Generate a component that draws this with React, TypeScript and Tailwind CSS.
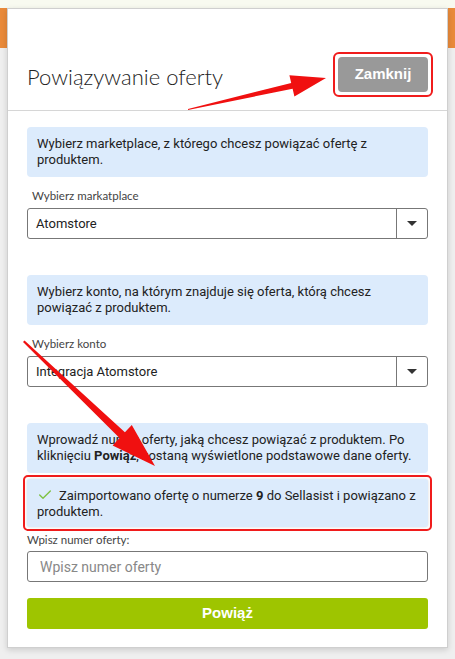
import { Check } from 'lucide-react'

function Caret() {
  return (
    <svg width="10" height="6" viewBox="0 0 10 6">
      <path d="M0 0 L10 0 L5 5 Z" fill="#333" />
    </svg>
  )
}

function Select({ value }: { value: string }) {
  return (
    <div className="flex h-[31px] rounded-[3px] border border-[#777] bg-white">
      <div className="flex flex-1 items-center px-[8px] text-[13px] text-[#222]">{value}</div>
      <div className="flex w-[31px] items-center justify-center border-l border-[#777]">
        <Caret />
      </div>
    </div>
  )
}

function Info({ children }: { children: React.ReactNode }) {
  return (
    <div className="rounded-[4px] bg-[#dcebfc] px-[10px] py-[9px] text-[13px] leading-[16px] text-[#222]">
      {children}
    </div>
  )
}

function Label({ children }: { children: React.ReactNode }) {
  return (
    <p className="mb-[5px] pl-[5px] text-[11.5px] leading-[14px] text-[#444]" style={{ fontFamily: 'Lato, sans-serif' }}>
      {children}
    </p>
  )
}

export default function App() {
  return (
    <div
      className="relative h-[659px] w-[455px] overflow-hidden bg-[linear-gradient(to_bottom,#f8faf0_0,#f8faf0_8px,#e98a3a_8px,#e98a3a_48px,#efefef_48px)] pt-[8px]"
      style={{ fontFamily: 'Roboto, "Liberation Sans", sans-serif' }}
    >
      <div className="mx-[7px] border border-[#cfcfcf] bg-white shadow-[0_2px_6px_rgba(0,0,0,0.15)]">
        <div className="flex items-center justify-between border-b border-[#d6d6d6] pb-[13px] pl-[19px] pr-[14px] pt-[43px]">
          <h1 className="pt-[4px] text-[22px] font-light text-[#222]" style={{ fontFamily: 'Lato, sans-serif' }}>
            Powiązywanie oferty
          </h1>
          <div className="rounded-[6px] border-2 border-[#f01c1c] p-[3px]">
            <button
              className="h-[35px] w-[90px] rounded-[4px] bg-[#999] text-[15px] font-bold text-white"
              style={{ fontFamily: '"Liberation Sans", Arial, sans-serif' }}
            >
              Zamknij
            </button>
          </div>
        </div>

        <div className="px-[19px] pb-[18px] pt-[16px]">
          <Info>Wybierz marketplace, z którego chcesz powiązać ofertę z produktem.</Info>
          <div className="mt-[12px]">
            <Label>Wybierz markatplace</Label>
            <Select value="Atomstore" />
          </div>

          <div className="mt-[36px]">
            <Info>Wybierz konto, na którym znajduje się oferta, którą chcesz powiązać z produktem.</Info>
          </div>
          <div className="mt-[12px]">
            <Label>Wybierz konto</Label>
            <Select value="Integracja Atomstore" />
          </div>

          <div className="mt-[36px]">
            <Info>
              Wprowadź numer oferty, jaką chcesz powiązać z produktem. Po kliknięciu <b>Powiąż</b>, zostaną wyświetlone
              podstawowe dane oferty.
            </Info>
          </div>
          <div className="-mx-[4px] mt-[2px] rounded-[5px] border-2 border-[#f01c1c] p-[2px]">
            <div className="rounded-[3px] bg-[#dcebfc] px-[10px] py-[8px] text-[13px] leading-[15.5px] text-[#222] shadow-[0_0_3px_rgba(0,0,0,0.15)]">
              <Check className="mr-[6px] inline-block align-[-3px]" size={16} strokeWidth={2} color="#7dc142" />
              Zaimportowano ofertę o numerze <b>9</b> do Sellasist i powiązano z produktem.
            </div>
          </div>

          <div className="mt-[2px]">
            <p className="mb-[4px] text-[11.5px] leading-[14px] text-[#444]" style={{ fontFamily: 'Lato, sans-serif' }}>
              Wpisz numer oferty:
            </p>
            <input
              placeholder="Wpisz numer oferty"
              className="h-[31px] w-full rounded-[3px] border border-[#777] px-[12px] text-[14px] text-[#222] placeholder:text-[#888] outline-none"
            />
          </div>

          <button
            className="mt-[16px] h-[31px] w-full rounded-[3px] bg-[#9ec500] text-[15px] font-bold text-white"
            style={{ fontFamily: '"Liberation Sans", Arial, sans-serif' }}
          >
            Powiąż
          </button>
        </div>
      </div>

      <svg className="pointer-events-none absolute left-0 top-0" width="455" height="659">
        <polygon
          points="188,110 292.6,88.8 294.4,96.6 326,78 289.4,75.2 291.2,83 188,109"
          fill="#f01010"
        />
        <polygon
          points="23,342 119.5,438.1 112.6,445.4 155,466 131.8,425 124.9,432.3 24.5,340.5"
          fill="#f01010"
        />
      </svg>
    </div>
  )
}
